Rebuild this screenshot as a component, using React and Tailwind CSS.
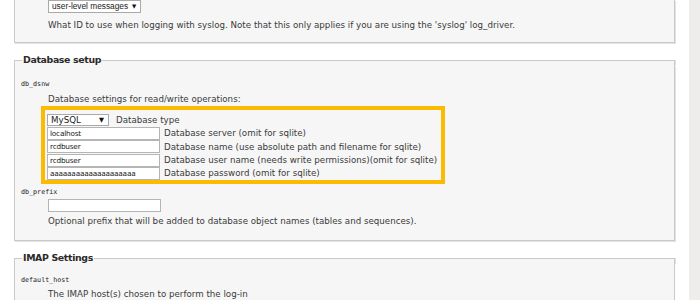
import { useState } from "react";

const body = { fontFamily: '"DejaVu Sans", Verdana, sans-serif' };

function FakeSelect({ value, className }) {
  return (
    <div
      className={`flex items-center justify-between bg-white border border-[#a9a9a9] pl-[3px] pr-[4px] ${className}`}
    >
      <span className="leading-none">{value}</span>
      <span className="text-[6.5px] leading-none text-[#111]">▼</span>
    </div>
  );
}

function Field({ value, label }) {
  return (
    <div className="flex items-center h-[13px]">
      <div className="w-[113px] h-[13px] bg-white border border-[#b5b5b5] pl-[2px] flex items-center text-[7.3px] tracking-[-0.2px] text-[#1a1a1a] leading-none">
        {value}
      </div>
      <span className="ml-[4px] leading-none">{label}</span>
    </div>
  );
}

function Key({ children }) {
  return (
    <p
      className="text-[6.7px] leading-[10px] text-[#222]"
      style={{ fontFamily: '"DejaVu Sans Mono", monospace' }}
    >
      {children}
    </p>
  );
}

// fieldset-style top edge: border line broken by the title
function Legend({ title }) {
  return (
    <div className="flex h-[12px]">
      <div className="w-[8px] mt-[6px] border-l border-t border-[#c9c9c9] bg-[#f6f6f6]" />
      <span className="px-[1px] text-[9.4px] font-bold tracking-[-0.35px] leading-[12px] text-[#2a2a2a] bg-[linear-gradient(to_bottom,transparent_6px,#f6f6f6_6px)]">
        {title}
      </span>
      <div className="flex-1 mt-[6px] border-r border-t border-[#c9c9c9] bg-[#f6f6f6] shadow-[1px_0_0_#e2e2e2]" />
    </div>
  );
}

export default function App() {
  const [rows] = useState([
    { value: "localhost", label: "Database server (omit for sqlite)" },
    { value: "rcdbuser", label: "Database name (use absolute path and filename for sqlite)" },
    { value: "rcdbuser", label: "Database user name (needs write permissions)(omit for sqlite)" },
    { value: "aaaaaaaaaaaaaaaaaaaa", label: "Database password (omit for sqlite)" },
  ]);

  return (
    <div className="flex h-[300px] overflow-hidden bg-white text-[8.7px] text-[#3a3a3a]" style={body}>
      <div className="flex-1 pl-[14px] pr-[14px]">
        {/* syslog panel, top cut off */}
        <div className="border-x border-b border-[#c9c9c9] bg-[#f6f6f6] shadow-[1px_1px_0_#e2e2e2] pl-[33px] pb-[11px]">
          <div
            className="flex items-center w-[93px] h-[13px] bg-white border border-[#a9a9a9] pl-[3px] text-[8.3px] text-[#222]"
            style={{ fontFamily: '"Liberation Sans", Arial, sans-serif' }}
          >
            <span className="leading-none">user-level messages</span>
            <span className="ml-[4px] text-[5.5px] leading-none text-[#111]" style={body}>▼</span>
          </div>
          <p className="mt-[7px] leading-[11px]">
            What ID to use when logging with syslog. Note that this only applies if you are using the 'syslog' log_driver.
          </p>
        </div>

        {/* Database setup */}
        <div className="mt-[11px]">
          <Legend title="Database setup" />
          <div className="border-x border-b border-[#c9c9c9] bg-[#f6f6f6] shadow-[1px_1px_0_#e2e2e2] pl-[6px] pb-[13px]">
            <div className="pt-[13px]">
              <Key>db_dsnw</Key>
            </div>
            <p className="ml-[27px] mt-[5px] leading-[11px]">Database settings for read/write operations:</p>
            <div className="ml-[20px] mt-[1px] w-[404px] border-4 border-[#fcba03] pl-[2px] pt-[4px]">
              <div className="flex items-center h-[12px] mb-[1px]">
                <FakeSelect value="MySQL" className="w-[62px] h-[12px] text-[8.7px] text-[#222]" />
                <span className="ml-[7px] leading-none">Database type</span>
              </div>
              <div className="flex flex-col gap-[0.4px]">
                {rows.map((r, i) => (
                  <Field key={i} value={r.value} label={r.label} />
                ))}
              </div>
            </div>
            <div className="mt-[3px]">
              <Key>db_prefix</Key>
            </div>
            <div className="ml-[27px] mt-[2px] w-[113px] h-[13px] bg-white border border-[#b5b5b5]" />
            <p className="ml-[27px] mt-[4px] leading-[11px]">
              Optional prefix that will be added to database object names (tables and sequences).
            </p>
          </div>
        </div>

        {/* IMAP Settings */}
        <div className="mt-[11px]">
          <Legend title="IMAP Settings" />
          <div className="border-x border-b border-[#c9c9c9] bg-[#f6f6f6] pl-[6px] pb-[13px]">
            <div className="pt-[11px]">
              <Key>default_host</Key>
            </div>
            <p className="ml-[27px] mt-[4px] leading-[11px]">The IMAP host(s) chosen to perform the log-in</p>
          </div>
        </div>
      </div>
      <div className="w-[11px] bg-[#efedeb]" />
    </div>
  );
}
